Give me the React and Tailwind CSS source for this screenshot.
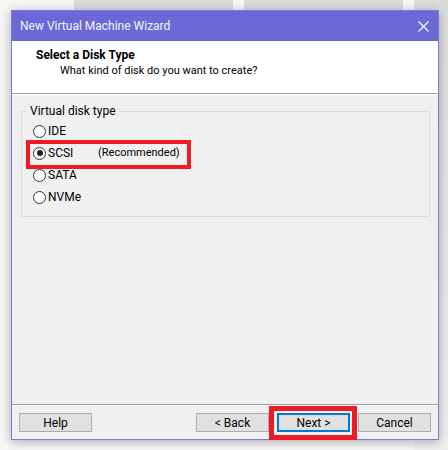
export default function App() {
  const Radio = ({ checked }) => (
    <span className="relative w-[13px] h-[13px] rounded-full border border-[#333333] bg-white shrink-0 flex items-center justify-center">
      {checked && <span className="w-[6px] h-[6px] rounded-full bg-[#222222]" />}
    </span>
  );
  const Btn = ({ children, primary }) => (
    <div
      className={
        "w-[73px] h-[19px] flex items-center justify-center bg-[#e1e1e1] " +
        (primary ? "border-2 border-[#0078d7]" : "border border-[#adadad]")
      }
    >
      {children}
    </div>
  );
  return (
    <div className="relative w-[448px] h-[450px] overflow-hidden bg-[#f6f6f6] font-['Roboto',sans-serif] text-[12px] leading-[16px] text-black">
      {/* background desktop windows */}
      <div className="absolute left-[74px] top-0 w-[159px] h-[80px] bg-[#dadada]" />
      <div className="absolute left-[244px] top-0 w-[159px] h-[80px] bg-[#dadada]" />
      <div className="absolute left-[414px] top-0 w-[34px] h-[450px] bg-gradient-to-b from-[#dcdcdc] via-[#e6e6e6] to-[#efefef]" />

      {/* wizard window */}
      <div className="absolute left-[11px] top-[10px] w-[428px] h-[430px] border border-[#7b79d9] bg-[#f0f0f0] shadow-[0_2px_10px_rgba(0,0,0,0.3)] flex flex-col">
        <div className="h-[30px] shrink-0 bg-[#6b69d6] flex items-center justify-between pl-[8px] pr-[9px] text-[#f4f4ff]">
          <span>New Virtual Machine Wizard</span>
          <svg width="11" height="11" viewBox="0 0 11 11" className="block">
            <path d="M0.5 0.5 L10.5 10.5 M10.5 0.5 L0.5 10.5" stroke="#ffffff" strokeWidth="1.1" fill="none" />
          </svg>
        </div>
        <div className="h-[52px] shrink-0 bg-white pl-[24px] pt-[6px]">
          <div className="font-bold">Select a Disk Type</div>
          <div className="pl-[24px] text-[11px] leading-[16px]">What kind of disk do you want to create?</div>
        </div>
        <div className="h-px shrink-0 bg-[#a0a0a0]" />
        <div className="h-px shrink-0 bg-white" />
        <div className="flex-1 pl-[9px] pr-[8px] pt-[16px]">
          <div className="relative h-[106px] border border-[#dcdcdc] pt-[8px] pl-[11px]">
            <span className="absolute left-[5px] top-[-9px] px-[3px] bg-[#f0f0f0]">Virtual disk type</span>
            <div className="flex flex-col">
              <div className="h-[22px] flex items-center gap-[2px]">
                <Radio />
                <span>IDE</span>
              </div>
              <div className="h-[22px] flex items-center gap-[2px]">
                <Radio checked />
                <span className="w-[48px]">SCSI</span>
                <span className="text-[11px]">(Recommended)</span>
              </div>
              <div className="h-[22px] flex items-center gap-[2px]">
                <Radio />
                <span>SATA</span>
              </div>
              <div className="h-[22px] flex items-center gap-[2px]">
                <Radio />
                <span>NVMe</span>
              </div>
            </div>
          </div>
        </div>
        <div className="h-px shrink-0 bg-[#a0a0a0]" />
        <div className="h-px shrink-0 bg-white" />
        <div className="h-[33px] shrink-0 flex items-start pt-[7px] pl-[7px] pr-[7px]">
          <Btn>Help</Btn>
          <div className="flex-1" />
          <div className="flex gap-[8px]">
            <Btn>&lt; Back</Btn>
            <Btn primary>Next &gt;</Btn>
            <Btn>Cancel</Btn>
          </div>
        </div>
      </div>

      {/* red annotation boxes */}
      <div className="absolute left-[26px] top-[140px] w-[165px] h-[29px] border-4 border-[#ed1c24]" />
      <div className="absolute left-[269px] top-[406px] w-[88px] h-[34px] border-[5px] border-[#ed1c24]" />
    </div>
  );
}
